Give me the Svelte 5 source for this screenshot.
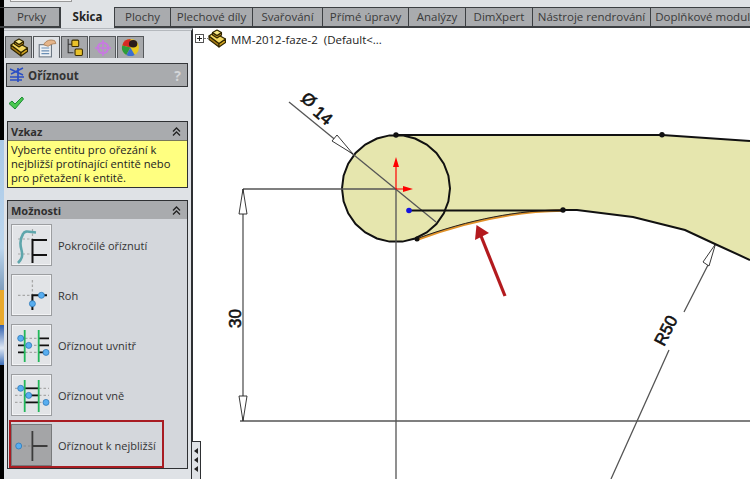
<script>
  const tabs = [
    { label: 'Prvky', w: 56 },
    { label: 'Skica', w: 55, active: true },
    { label: 'Plochy', w: 56 },
    { label: 'Plechové díly', w: 82 },
    { label: 'Svařování', w: 70 },
    { label: 'Přímé úpravy', w: 86 },
    { label: 'Analýzy', w: 57 },
    { label: 'DimXpert', w: 67 },
    { label: 'Nástroje rendrování', w: 118 },
    { label: 'Doplňkové moduly', w: 110 }
  ];

  const options = [
    { id: 'adv', label: 'Pokročilé oříznutí' },
    { id: 'corner', label: 'Roh' },
    { id: 'inside', label: 'Oříznout uvnitř' },
    { id: 'outside', label: 'Oříznout vně' },
    { id: 'nearest', label: 'Oříznout k nejbližší', selected: true }
  ];

  // the sketch circle is faceted in the reference, so it is a polygon here too
  const circle = Array.from({ length: 26 }, (_, i) => {
    const a = (i / 26) * Math.PI * 2;
    return `${(396 + 54 * Math.cos(a)).toFixed(1)},${(188.5 + 53.5 * Math.sin(a)).toFixed(1)}`;
  }).join(' ');

  const row = [13.3, 20.4, 27.4];
</script>

{#snippet partIcon()}
  <svg class="ico" viewBox="0 0 18 19" width="18" height="19">
    <g stroke="#2f2500" stroke-width="1.1" stroke-linejoin="round">
      <polygon points="1,7 1,10.500 11,18 11,14.500" fill="#a87c14" />
      <polygon points="11,14.500 11,18 17.500,13.500 17.500,10" fill="#d2a420" />
      <polygon points="1,7 6,3.500 17.500,10 11,14.500" fill="#f3d860" />
      <polygon points="4.500,3.500 4.500,6 9,9 13.500,6 13.500,3.500 9,6.500" fill="#b88a18" />
      <polygon points="4.500,3.500 9,1 13.500,3.500 9,6.500" fill="#f8e884" />
    </g>
  </svg>
{/snippet}

{#snippet chevrons()}
  <svg class="chev" viewBox="0 0 9 9" width="9" height="9">
    <path d="M1 4.500 4.500 1 8 4.500M1 8.500 4.500 5 8 8.500" fill="none" stroke="#222" stroke-width="1.3" />
  </svg>
{/snippet}

{#snippet blueDot(x, y)}
  <circle cx={x} cy={y} r="3" fill="#58aef0" stroke="#2f78b8" stroke-width="0.8" />
{/snippet}

{#snippet optionIcon(id)}
  <svg viewBox="0 0 41 41" width="41" height="41">
    {#if id === 'adv'}
      <path d="M21.500 4V14M7 14H21M7 29H21" stroke="#a8a8a8" stroke-width="1.200" stroke-dasharray="2.500 2" fill="none" />
      <path d="M21.500 14V38M21.500 15H36M21.500 30H36" stroke="#111" stroke-width="2" fill="none" />
      <path d="M25 7.500C18 7 14 5 12 9 9 14 9 20 10.500 25 12 31 11 34 7 38" stroke="#5fa6ac" stroke-width="2.600" fill="none" />
    {:else if id === 'corner'}
      <path d="M21.400 5V20M7 20.300H21" stroke="#a8a8a8" stroke-width="1.300" stroke-dasharray="2.500 2" fill="none" />
      <path d="M36 20.300H21.400V35" stroke="#111" stroke-width="2" fill="none" />
      {@render blueDot(30.4, 20.3)}
      {@render blueDot(21.4, 28.7)}
    {:else if id === 'inside'}
      {#each row as y}
        <path d="M7 {y}H14M28 {y}H38" stroke="#111" stroke-width="1.800" />
        <path d="M14 {y}H28" stroke="#a8a8a8" stroke-width="1.200" stroke-dasharray="2.500 2" />
      {/each}
      <path d="M13.700 5V37M27.700 5V37" stroke="#22b85a" stroke-width="1.800" />
      {@render blueDot(9.7, 13.3)}
      {@render blueDot(17.7, 20.4)}
      {@render blueDot(35, 27.4)}
    {:else if id === 'outside'}
      {#each row as y}
        <path d="M4 {y}H14M28 {y}H38" stroke="#a8a8a8" stroke-width="1.200" stroke-dasharray="2.500 2" />
        <path d="M14 {y}H28" stroke="#111" stroke-width="1.800" />
      {/each}
      <path d="M13.700 5V37M27.700 5V37" stroke="#22b85a" stroke-width="1.800" />
      {@render blueDot(9.7, 13.3)}
      {@render blueDot(17.7, 20.4)}
      {@render blueDot(35, 27.4)}
    {:else}
      <path d="M8 21H21" stroke="#8a8a8a" stroke-width="1.200" stroke-dasharray="2.500 2" />
      <path d="M21.400 6V36M21.400 21H36.500" stroke="#3c3c3c" stroke-width="1.800" fill="none" />
      {@render blueDot(7.7, 21)}
    {/if}
  </svg>
{/snippet}

<div class="app">
  <div class="topbar"><div class="searchbox"></div></div>

  <div class="tabs">
    {#each tabs as t}
      <div class="tab" class:active={t.active} style="flex-basis: {t.w}px">{t.label}</div>
    {/each}
  </div>

  <div class="main">
    <div class="desktop"></div>

    <aside class="panel">
      <div class="fm-tabs">
        <div class="fm-tab">{@render partIcon()}</div>
        <div class="fm-tab current">
          <svg viewBox="0 0 18 18" width="20" height="20">
            <rect x="2" y="6" width="11" height="11" fill="#eef1f4" stroke="#6d7884" />
            <path d="M4 9H11M4 11.500H11M4 14H11" stroke="#6a8fb5" stroke-width="1.100" />
            <path d="M6 6C8 2 12 1 16 2.500L17 5C14 5 12 6 10 7.500Z" fill="#e5b58a" stroke="#a5764c" stroke-width="0.700" />
          </svg>
        </div>
        <div class="fm-tab">
          <svg viewBox="0 0 18 18" width="19" height="19">
            <path d="M3 1V14H8M3 6H7" stroke="#333" fill="none" />
            <rect x="6.500" y="2" width="6.500" height="6" rx="1" fill="#e9c22a" stroke="#3a2c00" />
            <rect x="9.500" y="10.500" width="7" height="6" rx="1" fill="#e9c22a" stroke="#3a2c00" />
          </svg>
        </div>
        <div class="fm-tab">
          <svg viewBox="0 0 18 18" width="18" height="18">
            <circle cx="9" cy="9" r="5.200" fill="none" stroke="#c77be0" stroke-width="2" />
            <path d="M9 1V17M1 9H17" stroke="#c77be0" stroke-width="1.600" />
          </svg>
        </div>
        <div class="fm-tab">
          <svg viewBox="0 0 18 18" width="19" height="19">
            <circle cx="9" cy="9" r="8" fill="#e8c81e" />
            <path d="M9 9V1A8 8 0 0 0 1.200 7Z" fill="#d62a24" />
            <path d="M9 9 1.200 7A8 8 0 0 0 5 16Z" fill="#2c9c3c" />
            <path d="M9 9 5 16A8 8 0 0 0 13 16Z" fill="#3c6ed0" />
            <ellipse cx="11.500" cy="5.500" rx="4" ry="3.600" fill="#2a1a1a" />
          </svg>
        </div>
      </div>

      <header class="pm-head">
        <svg viewBox="0 0 16 16" width="16" height="16">
          <path d="M9 1V15M1 10H15M1 13H13" stroke="#2b4fc4" stroke-width="1.700" fill="none" />
          <path d="M1 2 14 8M14 1 2 7" stroke="#2b4fc4" stroke-width="1.400" fill="none" />
        </svg>
        <span class="pm-title">Oříznout</span>
        <span class="help">?</span>
      </header>

      <div class="ok">
        <svg viewBox="0 0 16 14" width="16" height="14">
          <path d="M1 7.500 4 5 7 8 14 1 15.500 3 7 13Z" fill="#49c850" stroke="#1d8a34" stroke-width="1" stroke-linejoin="round" />
        </svg>
      </div>

      <section class="group message">
        <div class="group-head"><span>Vzkaz</span>{@render chevrons()}</div>
        <p>Vyberte entitu pro ořezání k nejbližší protínající entitě nebo pro přetažení k entitě.</p>
      </section>

      <section class="group">
        <div class="group-head"><span>Možnosti</span>{@render chevrons()}</div>
        <div class="option-list">
          {#each options as o}
            <div class="option" class:selected={o.selected}>
              <div class="opt-btn">{@render optionIcon(o.id)}</div>
              <span>{o.label}</span>
            </div>
          {/each}
        </div>
      </section>
    </aside>

    <div class="canvas">
      <div class="tree">
        <span class="expander"></span>
        <span class="dots"></span>
        {@render partIcon()}
        <span class="tree-label">MM-2012-faze-2&nbsp; (Default&lt;...</span>
      </div>

      <!-- viewBox uses page coordinates -->
      <svg class="sketch" viewBox="193 28 557 451" width="557" height="451">
        <path
          d="M396 135H662L750 141V260L715 244 685 230 633 217 577 210H563C520 211 470 220 416 239Z"
          fill="#e6e6ae"
        />
        <polygon points={circle} fill="#e6e6ae" stroke="#111" stroke-width="2" />

        <g stroke="#555" stroke-width="1.300" fill="none">
          <path d="M243 189H396V479" />
          <path d="M240 421H750" />
          <path d="M243 189V421" />
          <path d="M289 102 436 222" />
          <path d="M611 479 669 350M684 312 708 265" />
        </g>

        <g fill="#fff" stroke="#222" stroke-width="0.900">
          <path d="M243 189 239 214H247Z" />
          <path d="M243 421 239 396H247Z" />
          <path d="M353 154 332 141 337 135Z" />
          <path d="M715.500 244 703 262 709 266Z" />
        </g>

        <path d="M396 135H662L750 141" fill="none" stroke="#111" stroke-width="2" />
        <path d="M563 210H577L633 217 685 230 715 244 750 260" fill="none" stroke="#111" stroke-width="2" />
        <path d="M416 240C470 220 520 211 563 210.500" fill="none" stroke="#e0922a" stroke-width="2.400" />
        <path d="M416 239C470 219 520 210 563 210" fill="none" stroke="#222" stroke-width="1" />
        <path d="M409 210.500H563" stroke="#111" stroke-width="2" />

        <circle cx="396" cy="135" r="2.700" fill="#111" />
        <circle cx="662" cy="134.800" r="2.700" fill="#111" />
        <circle cx="563" cy="210" r="2.700" fill="#111" />
        <circle cx="417" cy="239" r="2.500" fill="#111" />
        <circle cx="409" cy="210.500" r="2.800" fill="#1414e0" />

        <!-- origin -->
        <path d="M396 189V165M396 189H405" stroke="#f00" stroke-width="1.200" />
        <path d="M396 157 393 167H399ZM413 189 403 186V192Z" fill="#f00" />

        <!-- red pointer -->
        <path d="M505 296 481 236" stroke="#b31a1e" stroke-width="3.200" />
        <path d="M476.500 225 475 240 489 233Z" fill="#b31a1e" />

        <text class="dim" transform="translate(300 100) rotate(40)">Ø</text>
        <text class="dim" transform="translate(312 114) rotate(40)">14</text>
        <text class="dim" transform="translate(241 328) rotate(-90)">30</text>
        <text class="dim" transform="translate(664 347) rotate(-63)">R50</text>
      </svg>
    </div>

    <div class="gripper">
      {#each [0, 1, 2] as g}
        <svg viewBox="0 0 4 6" width="4" height="6"><path d="M0 3 4 0V6Z" fill="#222" /></svg>
      {/each}
    </div>
  </div>
</div>

<style>
  :global(body) {
    margin: 0;
  }

  .app {
    width: 750px;
    height: 479px;
    display: flex;
    flex-direction: column;
    overflow: hidden;
    position: relative;
    background: #fff;
    font-family: "Open Sans", "Noto Sans", sans-serif;
    color: #2b2b2b;
  }

  .topbar {
    height: 7px;
    flex: none;
    padding-left: 6px;
    background: #dfe2e5;
    border-left: 4px solid #000;
    box-sizing: border-box;
  }

  .searchbox {
    width: 60px;
    height: 1px;
    background: #f4f4f4;
    border: 1px solid #999;
    border-top: none;
  }

  .tabs {
    display: flex;
    flex: none;
    height: 21px;
    padding-left: 4px;
    box-sizing: border-box;
    background: #000;
    border-top: 1px solid #3c3f42;
    border-bottom: 2px solid #3c3f42;
    white-space: nowrap;
  }

  .tab {
    flex: none;
    box-sizing: border-box;
    background: #a9abae;
    border-right: 1px solid #3c3f42;
    text-align: center;
    font-size: 11.5px;
    line-height: 18px;
    color: #3a3a3a;
  }

  .tab.active {
    background: #dfe2e5;
    font-weight: 700;
    color: #222;
    height: 21px;
    margin-top: -1px;
    line-height: 20px;
    position: relative;
    border-left: 1px solid #3c3f42;
  }

  .main {
    flex: 1;
    display: flex;
    position: relative;
    min-height: 0;
  }

  .desktop {
    width: 4px;
    flex: none;
    background: linear-gradient(
      #000 0 112px,
      #a9c8e6 112px,
      #bcd6ee 220px,
      #7f9dbc 262px,
      #e9a92c 262px 297px,
      #2f5fae 297px,
      #dfe8f4 320px,
      #3e6fb8 337px,
      #000 337px
    );
  }

  .panel {
    width: 187px;
    flex: none;
    background: #dfe2e6;
    border-right: 2px solid #2e3033;
    border-top: 3px double #b4b8bd;
  }

  .fm-tabs {
    display: flex;
    gap: 1px;
    padding: 5px 0 0 1px;
    height: 22px;
  }

  .fm-tab {
    width: 27px;
    height: 22px;
    display: flex;
    align-items: center;
    justify-content: center;
    background: #a7a9ac;
    border: 1px solid #55585b;
    border-bottom: none;
    box-sizing: border-box;
  }

  .fm-tab.current {
    background: #dfe2e6;
  }

  .pm-head {
    margin: 5px 3px 0 2px;
    height: 24px;
    box-sizing: border-box;
    display: flex;
    align-items: center;
    gap: 3px;
    padding: 0 6px 0 2px;
    background: #a9abae;
    border: 1px solid #35373a;
  }

  .pm-title {
    font-size: 11.5px;
    font-weight: 700;
    color: #333;
    flex: 1;
  }

  .help {
    font-size: 14px;
    font-weight: 700;
    color: #d4d6d8;
  }

  .ok {
    height: 34px;
    padding: 6px 0 0 4px;
    box-sizing: border-box;
  }

  .group {
    margin: 0 3px 12px 3px;
    border: 1px solid #2e3033;
    background: #d4d7dc;
  }

  .group-head {
    height: 18px;
    padding: 0 6px 0 3px;
    display: flex;
    align-items: center;
    justify-content: space-between;
    background: #a9abae;
    font-size: 11px;
    font-weight: 700;
    color: #2f2f2f;
    box-sizing: border-box;
  }

  .chev {
    flex: none;
  }

  .message p {
    margin: 0;
    padding: 2px 12px 2px 3px;
    background: #ffff80;
    border-top: 1px solid #77775a;
    font-size: 11.2px;
    line-height: 14px;
    color: #222;
  }

  .option-list {
    display: flex;
    flex-direction: column;
    gap: 8px;
    padding: 5px 0 2px 3px;
  }

  .option {
    display: flex;
    align-items: center;
    gap: 6px;
    font-size: 11px;
    color: #333;
    position: relative;
  }

  .opt-btn {
    width: 41px;
    height: 42px;
    flex: none;
    overflow: hidden;
    display: flex;
    align-items: center;
    justify-content: center;
    box-sizing: border-box;
    border: 1px solid #9c9ea1;
    box-shadow: inset 0 0 0 1px #f2f3f5;
    background: #e2e4e7;
  }

  .opt-btn svg {
    flex: none;
  }

  .selected .opt-btn {
    background: #a4a5a7;
    border-color: #77797b;
    box-shadow: none;
  }

  /* red annotation around the last option */
  .selected::after {
    content: "";
    position: absolute;
    left: -2px;
    top: -4px;
    width: 151px;
    height: 44px;
    border: 2px solid #a81c22;
  }

  .canvas {
    flex: 1;
    position: relative;
    min-width: 0;
  }

  .sketch {
    display: block;
  }

  .tree {
    position: absolute;
    left: 2px;
    top: 1px;
    display: flex;
    align-items: center;
    font-size: 11.5px;
    color: #222;
    z-index: 1;
  }

  .expander {
    width: 7px;
    height: 7px;
    border: 1px solid #555;
    background:
      linear-gradient(#222, #222) center / 5px 1px no-repeat,
      linear-gradient(#222, #222) center / 1px 5px no-repeat,
      #fff;
  }

  .dots {
    width: 4px;
    border-top: 1px dotted #777;
  }

  .ico {
    flex: none;
  }

  .tree-label {
    margin: 2px 0 0 5px;
  }

  .dim {
    font-family: "Liberation Sans", sans-serif;
    font-size: 17px;
    fill: #111;
    stroke: #111;
    stroke-width: 0.6;
  }

  /* collapse grip sits over the corner of the viewport */
  .gripper {
    position: absolute;
    left: 192px;
    top: 413px;
    width: 9px;
    bottom: 0;
    box-sizing: border-box;
    padding: 6px 0 0 2px;
    display: flex;
    flex-direction: column;
    gap: 3px;
    background: #dfe2e6;
    border-top: 1px solid #2e3033;
    border-right: 1px solid #2e3033;
  }

  .gripper svg {
    display: block;
    flex: none;
  }
</style>
